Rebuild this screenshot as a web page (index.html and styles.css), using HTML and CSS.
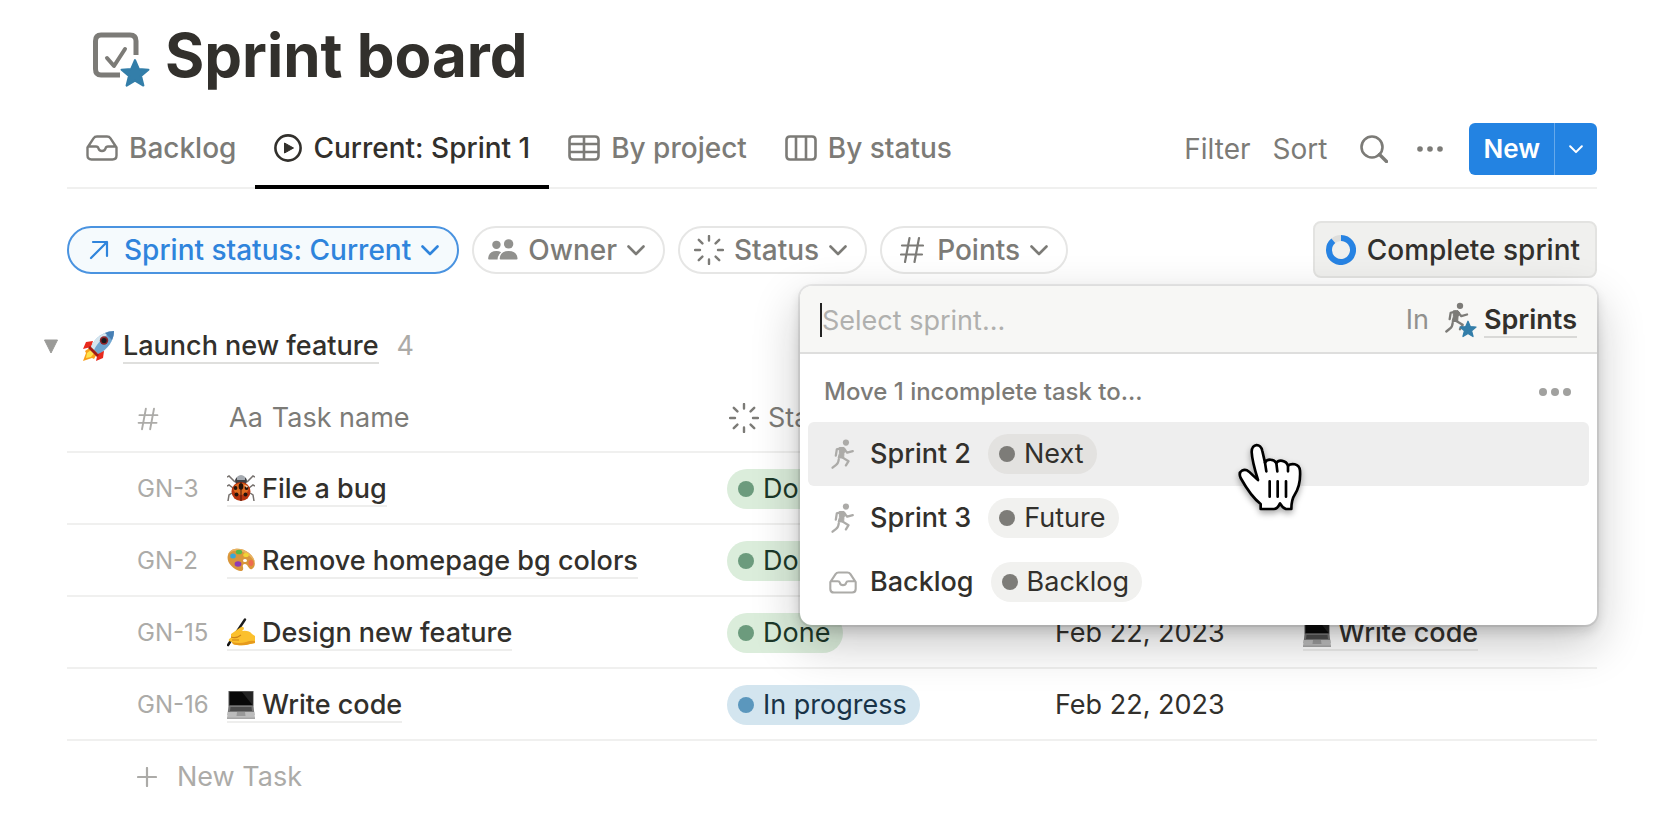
FILE: index.html
```html
<!DOCTYPE html>
<html lang="en">
<head>
  <meta charset="UTF-8">
  <meta name="viewport" content="width=device-width, initial-scale=1.0">
  <title>Sprint board</title>
  <link rel="stylesheet" href="styles.css">
</head>
<body>
  <svg class="sprite" aria-hidden="true">
    <symbol id="i-inbox" viewBox="0 0 32 26">
      <path d="M1.500 12.500 7.500 3.400Q8.700 1.500 11 1.500h10Q23.300 1.500 24.500 3.400L30.500 12.500V20.500Q30.500 24.500 26.500 24.500H5.500Q1.500 24.500 1.500 20.500ZM1.500 11.500h8.500q2 0 2.400 1.800.6 2.700 3.600 2.700t3.600-2.700q.4-1.800 2.400-1.800h8.500" fill="none" stroke="currentColor" stroke-width="2.400" stroke-linejoin="round"/>
    </symbol>
    <symbol id="i-chevron" viewBox="0 0 18 12">
      <path d="M1.500 2.500 9 10l7.500-7.500" fill="none" stroke="currentColor" stroke-width="2.600" stroke-linecap="round" stroke-linejoin="round"/>
    </symbol>
    <symbol id="i-burst" viewBox="0 0 30 30">
      <path d="M15 1v4.500M15 24.500V29M1 15h5M24 15h5M4.800 4.800l3.600 3.600M21.600 21.600l3.600 3.600M4.800 25.200l3.600-3.600M21.600 8.400l3.600-3.600" fill="none" stroke="currentColor" stroke-width="2.400" stroke-linecap="round"/>
    </symbol>
    <symbol id="i-hash" viewBox="0 0 24 28">
      <path d="M9.500 2 5 26M19 2l-4.500 24M2 9.500h21M1 18.500h21" fill="none" stroke="currentColor" stroke-width="2.200" stroke-linecap="round"/>
    </symbol>
    <symbol id="i-dots" viewBox="0 0 32 8">
      <circle cx="4" cy="4" r="4"/><circle cx="16" cy="4" r="4"/><circle cx="28" cy="4" r="4"/>
    </symbol>
    <symbol id="i-star" viewBox="0 0 28 28">
      <path d="M14 2l3.500 8.300 9 .7-6.900 5.800 2.200 8.900L14 21l-7.800 4.700 2.200-8.900L1.500 11l9-.7z" fill="#337ea9" stroke="#337ea9" stroke-width="2" stroke-linejoin="round"/>
    </symbol>
    <symbol id="i-runner" viewBox="0 0 72 92">
      <circle cx="45" cy="11" r="9.500" fill="currentColor"/>
      <path d="M25 26h14l5 6-5 12 -1 14H21l4-14z" fill="currentColor" stroke="currentColor" stroke-width="3" stroke-linejoin="round"/>
      <path d="M31 28 17 32l-3 19M37 28l12 14 17-5M30 54l23 14-8 13M23 62q-1 13-8 17L4 88" fill="none" stroke="currentColor" stroke-width="7" stroke-linecap="round" stroke-linejoin="round"/>
    </symbol>
    <symbol id="i-laptop" viewBox="0 0 28 30">
      <path d="M1.500 1h25v15h-25z" fill="#555"/>
      <path d="M2.500 2h23v13h-23z" fill="#080808"/>
      <path d="M15 2h10.500v13z" fill="#242424"/>
      <path d="M1.500 16h25l1 9H.5z" fill="#777"/>
      <path d="M3.500 17h21l.5 4H3z" fill="#4c4c4c"/>
      <path d="M.7 22h26.600l.7 6H0z" fill="#bcbcbc"/>
      <path d="M10 22h8l.5 4h-9z" fill="#999"/>
      <path d="M0 27.500h28V29H0z" fill="#a6a6a6"/>
    </symbol>
  </svg>

  <main class="page">
    <header class="title-row">
      <svg class="title-icon" viewBox="0 0 58 58" aria-hidden="true">
        <path d="M43 24V10Q43 4 37 4H8Q2.500 4 2.500 10v28q0 6 5.500 6h19" fill="none" stroke="#7c7b77" stroke-width="5"/>
        <path d="M14 27l7 8 11-17" fill="none" stroke="#7c7b77" stroke-width="4" stroke-linecap="round" stroke-linejoin="round"/>
        <use href="#i-star" x="27" y="27" width="30" height="30"/>
      </svg>
      <h1>Sprint board</h1>
    </header>

    <div class="view-bar">
      <nav class="tabs">
        <a class="tab" href="#backlog"><svg width="32" height="26"><use href="#i-inbox"/></svg>Backlog</a>
        <a class="tab active" href="#current">
          <svg width="28" height="28" viewBox="0 0 28 28"><circle cx="14" cy="14" r="12.600" fill="none" stroke="currentColor" stroke-width="2.600"/><path d="M10.500 9v10l9-5z" fill="currentColor" stroke="currentColor" stroke-linejoin="round"/></svg>Current: Sprint 1</a>
        <a class="tab" href="#project">
          <svg width="32" height="26" viewBox="0 0 32 26"><path d="M5 1.500h22q3.500 0 3.500 3.500v16q0 3.500-3.500 3.500H5q-3.500 0-3.500-3.500V5Q1.500 1.500 5 1.500zM1.500 9h29M1.500 17h29M16 1.500v23" fill="none" stroke="currentColor" stroke-width="2.600"/></svg>By project</a>
        <a class="tab" href="#status">
          <svg width="32" height="26" viewBox="0 0 32 26"><path d="M5 1.500h22q3.500 0 3.500 3.500v16q0 3.500-3.500 3.500H5q-3.500 0-3.500-3.500V5Q1.500 1.500 5 1.500zM11 1.500v23M21 1.500v23" fill="none" stroke="currentColor" stroke-width="2.600"/></svg>By status</a>
      </nav>
      <div class="actions">
        <button class="plain">Filter</button>
        <button class="plain">Sort</button>
        <button class="plain icon-btn search" aria-label="Search">
          <svg width="28" height="28" viewBox="0 0 28 28"><circle cx="12" cy="12" r="10.500" fill="none" stroke="currentColor" stroke-width="2.600"/><path d="M19.500 19.500l7 7" stroke="currentColor" stroke-width="3.400" stroke-linecap="round"/></svg>
        </button>
        <button class="plain icon-btn" aria-label="More"><svg width="28" height="6" viewBox="0 0 28 6" fill="currentColor"><circle cx="4" cy="3" r="2.800"/><circle cx="14" cy="3" r="2.800"/><circle cx="24" cy="3" r="2.800"/></svg></button>
        <div class="new-group">
          <button class="new">New</button>
          <button class="new-more" aria-label="New from template"><svg width="14" height="10"><use href="#i-chevron"/></svg></button>
        </div>
      </div>
    </div>

    <div class="filters">
      <button class="chip chip-active">
        <svg class="chip-arrow" width="20" height="20" viewBox="0 0 20 20"><path d="M2 18 18 2M4 2h14v14" fill="none" stroke="currentColor" stroke-width="2.200" stroke-linecap="round" stroke-linejoin="round"/></svg>
        <span>Sprint status: Current</span>
        <svg width="18" height="12"><use href="#i-chevron"/></svg>
      </button>
      <button class="chip">
        <svg width="30" height="24" viewBox="0 0 32 24" fill="#91918e"><circle cx="9" cy="6.500" r="4.500"/><circle cx="22" cy="5.500" r="5"/><path d="M1 22q-1 0-.8-1.500Q1.200 13 9 13q3 0 5 1.500-3.500 3-3.800 7.500zM13.500 22q-1.200 0-1-1.300Q13.500 13 22 13t9.500 7.700q.2 1.300-1 1.300z"/></svg>
        Owner
        <svg width="18" height="12"><use href="#i-chevron"/></svg>
      </button>
      <button class="chip">
        <svg width="30" height="30"><use href="#i-burst"/></svg>
        Status
        <svg width="18" height="12"><use href="#i-chevron"/></svg>
      </button>
      <button class="chip">
        <svg class="chip-hash" width="24" height="28"><use href="#i-hash"/></svg>
        Points
        <svg width="18" height="12"><use href="#i-chevron"/></svg>
      </button>
      <button class="complete">
        <svg width="30" height="30" viewBox="0 0 30 30"><circle cx="15" cy="15" r="12" fill="none" stroke="#dededc" stroke-width="6"/><path d="M15 3a12 12 0 1 1-7.700 2.800" fill="none" stroke="#2783e3" stroke-width="6"/></svg>
        Complete sprint
      </button>

      <div class="menu">
        <div class="menu-search">
          <input type="text" placeholder="Select sprint..." aria-label="Select sprint">
          <span class="in">In</span>
          <svg class="sprints-icon" viewBox="0 0 32 36" aria-hidden="true"><use href="#i-runner" x="0" y="0" width="24" height="31"/><use href="#i-star" x="14" y="18" width="18" height="18"/></svg>
          <a href="#sprints">Sprints</a>
        </div>
        <div class="menu-head">
          <span>Move 1 incomplete task to...</span>
          <button aria-label="Options"><svg width="32" height="8" fill="#a1a19f"><use href="#i-dots"/></svg></button>
        </div>
        <button class="option selected">
          <svg class="option-icon" width="28" height="30"><use href="#i-runner"/></svg>Sprint 2<span class="tag gray"><i></i>Next</span>
        </button>
        <button class="option">
          <svg class="option-icon" width="28" height="30"><use href="#i-runner"/></svg>Sprint 3<span class="tag gray"><i></i>Future</span>
        </button>
        <button class="option">
          <svg class="option-icon" width="28" height="23"><use href="#i-inbox"/></svg>Backlog<span class="tag gray"><i></i>Backlog</span>
        </button>
        <svg class="cursor" viewBox="0 0 192 206" aria-hidden="true">
          <path d="M60 112C50 80 42 50 41 28 41 1 69 1 73 25L81 60C86 48 108 48 115 61 122 50 144 52 150 69 158 62 184 60 186 84 188 116 182 138 170 156 162 168 160 178 160 199H144Q134 196 126 182 118 199 108 199H68V184C50 170 28 142 8 106-2 84 20 76 33 87Q44 98 60 112Z" fill="#fff" stroke="#000" stroke-width="8" stroke-linejoin="round"/>
          <path d="M81 60l4 26M115 61l3 25M150 69v17M95 116v46M119 116v46M144 116v46" fill="none" stroke="#000" stroke-width="8" stroke-linecap="round"/>
        </svg>
      </div>
    </div>

    <section class="group">
      <div class="group-head">
        <button class="toggle" aria-label="Collapse group"><svg width="16" height="15" viewBox="0 0 16 15"><path d="M1.500 1h13L8 14z" fill="#9b9b98" stroke="#9b9b98" stroke-linejoin="round"/></svg></button>
        <svg class="rocket" viewBox="0 0 32 32" aria-hidden="true">
          <path d="M10 11 3 12 0 19l8-2zM21 21l-1 7-7 3 2-9z" fill="#e8291c"/>
          <path d="M8 17 2 21l1 2-3 8 9-3 2 1 4-7z" fill="#f9a01b"/>
          <path d="M8 20l-4 3-1 5 5-1 4-5z" fill="#ffe34d"/>
          <path d="M31 1C22 1 12 7 8 17l7 7C25 20 31 10 31 1z" fill="#6fa5cf"/>
          <path d="M31 1C22 1 12 7 8 17l3 3C15 12 22 5 31 1z" fill="#d5e5ee"/>
          <path d="M31 1q-5 0-9 2l7 7q2-4 2-9z" fill="#477fb4"/>
          <circle cx="21" cy="10.500" r="4.200" fill="#8d2328"/><circle cx="21" cy="10.500" r="2.600" fill="#17191e"/>
          <path d="M7 16l9 9-2 2-9-9z" fill="#a11b16"/>
        </svg>
        <a class="group-name" href="#launch">Launch new feature</a>
        <span class="count">4</span>
      </div>

      <table>
        <colgroup>
          <col class="col-id"><col class="col-name"><col class="col-status"><col class="col-date"><col>
        </colgroup>
        <thead>
          <tr>
            <th class="id"><svg width="22" height="24" aria-label="ID"><use href="#i-hash"/></svg></th>
            <th><span class="th-label"><span>Aa</span>Task name</span></th>
            <th><span class="th-label"><svg width="30" height="30"><use href="#i-burst"/></svg>Status</span></th>
            <th></th>
            <th></th>
          </tr>
        </thead>
        <tbody>
          <tr>
            <td class="id">GN-3</td>
            <td><a class="task" href="#gn-3">
              <svg class="emoji" viewBox="0 0 28 30" aria-hidden="true">
                <path d="M8 8 2 2 0 3M20 8l6-6 2 1M6 14l-4-3-2 1M22 14l4-3 2 1M5 19l-3 2-1 6M23 19l3 2 1 6" fill="none" stroke="#77726f" stroke-width="1.500"/>
                <ellipse cx="14" cy="7" rx="6" ry="5" fill="#3f4145"/><path d="M10 3q4-4 8 0v3h-8z" fill="#a5aab0"/>
                <ellipse cx="14" cy="17.500" rx="9.500" ry="9.500" fill="#b9340f"/><ellipse cx="14" cy="15" rx="7.500" ry="6" fill="#df6a1f"/>
                <path d="M14 8v19" stroke="#471509" stroke-width="1"/>
                <ellipse cx="14" cy="12.500" rx="2.300" ry="3.200" fill="#26140c"/><circle cx="8.500" cy="14" r="1.900" fill="#26140c"/><circle cx="19.500" cy="14" r="1.900" fill="#26140c"/><circle cx="9.500" cy="20.500" r="2" fill="#26140c"/><circle cx="18.500" cy="20.500" r="2" fill="#26140c"/>
                <path d="M17 11l4 1-1 2z" fill="#f9d6b1"/>
              </svg>File a bug</a></td>
            <td><span class="tag green"><i></i>Done</span></td>
            <td></td>
            <td></td>
          </tr>
          <tr>
            <td class="id">GN-2</td>
            <td><a class="task" href="#gn-2">
              <svg class="emoji" viewBox="0 0 28 30" aria-hidden="true">
                <path d="M1 9C3 1 15 1 22 7c6 5 8 13 3 16-2 1-3-1-5-4-2-2-5-1-4 2 1 4-2 5-6 3C4 21-1 15 1 9z" fill="#d9963b"/>
                <path d="M1 9C3 1 15 1 22 7c4 3 5 6 6 9-4-5-9-10-16-11C6 4 3 6 1 9z" fill="#e8b262"/>
                <ellipse cx="12" cy="6" rx="3.200" ry="2.300" fill="#57b947"/><ellipse cx="6" cy="10" rx="2.800" ry="2.500" fill="#37a6da"/><ellipse cx="19" cy="9" rx="2.800" ry="2" fill="#f2d334"/><ellipse cx="11" cy="18" rx="3.400" ry="2.700" fill="#8e3bb4"/><ellipse cx="24" cy="17" rx="2.400" ry="3" fill="#ee6a50"/><ellipse cx="18" cy="14.500" rx="2" ry="1.500" fill="#fff"/>
              </svg>Remove homepage bg colors</a></td>
            <td><span class="tag green"><i></i>Done</span></td>
            <td></td>
            <td></td>
          </tr>
          <tr>
            <td class="id">GN-15</td>
            <td><a class="task" href="#gn-15">
              <svg class="emoji" viewBox="0 0 28 30" aria-hidden="true">
                <path d="M18 1.500 1 27" stroke="#1d1d1d" stroke-width="2.400" stroke-linecap="round"/>
                <path d="M4 16 14 9q3-1 3 2l-2 2q7-1 10 3l3 2v7l-5 1q-6 2-13 1-5 0-5-3l-3-1q-1-2 2-3z" fill="#fbc02d"/>
                <path d="M5 24q8 2 14 0 5-2 9-1v2l-5 1q-6 2-13 1-4 0-5-3z" fill="#e69a1c"/>
                <path d="M4 19q5 2 10-2M5 22h7" fill="none" stroke="#cf8417" stroke-width="1.100"/>
                <path d="M3 24 1 28" stroke="#111" stroke-width="1.600"/>
              </svg>Design new feature</a></td>
            <td><span class="tag green"><i></i>Done</span></td>
            <td>Feb 22, 2023</td>
            <td><a class="task" href="#gn-16"><svg class="emoji" aria-hidden="true"><use href="#i-laptop"/></svg>Write code</a></td>
          </tr>
          <tr>
            <td class="id">GN-16</td>
            <td><a class="task" href="#gn-16"><svg class="emoji" aria-hidden="true"><use href="#i-laptop"/></svg>Write code</a></td>
            <td><span class="tag blue"><i></i>In progress</span></td>
            <td>Feb 22, 2023</td>
            <td></td>
          </tr>
        </tbody>
      </table>
      <button class="new-task"><svg width="20" height="20" viewBox="0 0 20 20"><path d="M10 1v18M1 10h18" stroke="currentColor" stroke-width="2.200" stroke-linecap="round"/></svg>New Task</button>
    </section>
  </main>
</body>
</html>
```
FILE: styles.css
```css
* { box-sizing: border-box; margin: 0; padding: 0; }
body {
  background: #fff;
  color: #32302c;
  font-family: Inter, "Liberation Sans", sans-serif;
  font-size: 27px;
  line-height: 32px;
}
a { color: inherit; text-decoration: none; }
button, input {
  font: inherit;
  color: inherit;
  background: none;
  border: none;
  outline: none;
}
button { cursor: pointer; white-space: nowrap; }
svg { flex: none; }
.sprite { position: absolute; width: 0; height: 0; }
.page { padding: 15px 81px 24px 67px; }

/* title */
.title-row {
  display: flex;
  align-items: center;
  gap: 14px;
  height: 80px;
  padding-left: 26px;
}
.title-icon { width: 58px; height: 58px; margin-top: 10px; }
h1 { font-size: 60px; line-height: 80px; font-weight: 700; }

/* views */
.view-bar {
  display: flex;
  justify-content: space-between;
  height: 78px;
  margin-top: 16px;
  border-bottom: 2px solid #f0f0ef;
  font-size: 28px;
}
.tabs { display: flex; margin-bottom: -2px; }
.tab {
  display: flex;
  align-items: center;
  gap: 11px;
  padding: 0 19px;
  color: #7c7b77;
  font-weight: 500;
  white-space: nowrap;
  border-bottom: 4px solid transparent;
}
.tab.active { color: #32302c; border-color: #000; }
.actions { display: flex; align-items: center; gap: 22px; }
.plain { color: #7c7b77; }
.icon-btn { display: flex; padding: 0 3px; }
.search { margin-left: 8px; }
.new-group {
  display: flex;
  height: 52px;
  border-radius: 6px;
  overflow: hidden;
  background: #2383e2;
  color: #fff;
}
.new { padding: 0 14px; font-size: 26px; font-weight: 600; }
.new-more {
  display: flex;
  align-items: center;
  padding: 0 14px;
  border-left: 1px solid #65a9eb;
}

/* filters */
.filters {
  position: relative;
  display: flex;
  align-items: center;
  gap: 13px;
  margin-top: 32px;
}
.chip {
  display: flex;
  align-items: center;
  gap: 10px;
  height: 48px;
  padding: 0 18px 0 14px;
  border: 2px solid #e6e6e5;
  border-radius: 24px;
  color: #7c7b77;
  font-size: 28px;
  font-weight: 500;
}
.chip-active {
  padding-left: 20px;
  border-color: #4a93e0;
  background: #f5fafd;
  color: #2f84dc;
}
.chip-arrow { margin-right: 5px; }
.chip-hash { margin: 0 3px 0 4px; }
.complete {
  display: flex;
  align-items: center;
  gap: 11px;
  height: 57px;
  margin-left: auto;
  padding: 0 15px 0 11px;
  border: 2px solid #e3e3e1;
  border-radius: 8px;
  background: #f0f0ee;
  font-size: 28px;
  font-weight: 500;
}

/* sprint menu */
.menu {
  position: absolute;
  top: calc(100% + 8px);
  right: 0;
  width: 797px;
  padding-bottom: 11px;
  border-radius: 12px;
  background: #fff;
  box-shadow: 0 0 0 2px rgba(15, 15, 15, 0.07), 0 6px 12px rgba(15, 15, 15, 0.14), 0 18px 48px rgba(15, 15, 15, 0.24);
}
.menu-search {
  display: flex;
  align-items: center;
  height: 68px;
  padding: 2px 20px 0;
  border-bottom: 2px solid #dededd;
  border-radius: 12px 12px 0 0;
  background: #f7f7f5;
}
.menu-search input {
  flex: 1;
  min-width: 0;
  height: 34px;
  border-left: 2px solid #222;
}
.menu-search input::placeholder { color: #b0b0ae; opacity: 1; }
.in { color: #91918e; }
.sprints-icon { width: 32px; height: 36px; margin: 0 7px 0 16px; color: #7c7b77; }
.menu-search a { padding-top: 2px; font-weight: 600; border-bottom: 2px solid #d9d9d7; }
.menu-head {
  display: flex;
  justify-content: space-between;
  align-items: center;
  height: 68px;
  padding: 8px 26px 0 24px;
  color: #7c7b77;
  font-size: 24px;
  font-weight: 500;
}
.menu-head button { display: flex; }
.option {
  display: flex;
  align-items: center;
  width: calc(100% - 16px);
  height: 64px;
  margin: 0 8px;
  padding: 0 21px;
  border-radius: 6px;
  font-weight: 500;
}
.option.selected { background: #eee; }
.option-icon { margin-right: 13px; color: #acaba8; }
.option .tag { margin-left: 17px; font-weight: 400; }
.cursor {
  position: absolute;
  top: 156px;
  left: 55%;
  width: 64px;
  height: 70px;
  filter: drop-shadow(0 3px 3px rgba(0, 0, 0, 0.35));
}

/* tags */
.tag {
  display: inline-flex;
  align-items: center;
  gap: 9px;
  height: 40px;
  padding: 0 13px 0 11px;
  border-radius: 20px;
  vertical-align: middle;
}
.tag i { width: 16px; height: 16px; border-radius: 50%; }
.gray { background: #f1f1ef; }
.gray i { background: #7d7c78; }
.selected .gray { background: #e3e2e0; }
.green { background: #dbeddb; color: #1c3829; }
.green i { background: #6c9b7d; }
.blue { background: #d3e5ef; color: #183347; }
.blue i { background: #5b97bd; }

/* group */
.group { margin-top: 46px; }
.group-head { display: flex; align-items: center; height: 44px; margin-left: -24px; }
.toggle { display: flex; margin-right: 24px; }
.rocket { width: 32px; height: 32px; margin-right: 8px; }
.group-name { padding-top: 2px; font-weight: 500; border-bottom: 2px solid #dfdfdd; }
.count { margin-left: 18px; color: #acaba8; }

/* tasks */
table {
  width: 100%;
  margin-top: 16px;
  border-collapse: separate;
  border-spacing: 0;
  table-layout: fixed;
}
.col-id { width: 150px; }
.col-name { width: 500px; }
.col-status { width: 328px; }
.col-date { width: 248px; }
th, td {
  height: 72px;
  padding: 2px 10px 0;
  border-bottom: 2px solid #f0f0ef;
  text-align: left;
  white-space: nowrap;
}
th { height: 69px; padding: 0 12px; font-weight: 400; color: #7c7b77; }
th svg { display: block; }
td.id, th.id { padding: 2px 0 0 70px; color: #acaba8; font-size: 24px; }
.th-label { display: flex; align-items: center; gap: 9px; }
.task {
  display: inline-flex;
  align-items: center;
  gap: 7px;
  padding-top: 2px;
  font-weight: 500;
  vertical-align: middle;
  border-bottom: 2px solid #eeeeed;
}
.emoji { width: 28px; height: 30px; }
.new-task {
  display: flex;
  align-items: center;
  gap: 20px;
  height: 72px;
  padding-left: 70px;
  color: #acaba8;
}
```
